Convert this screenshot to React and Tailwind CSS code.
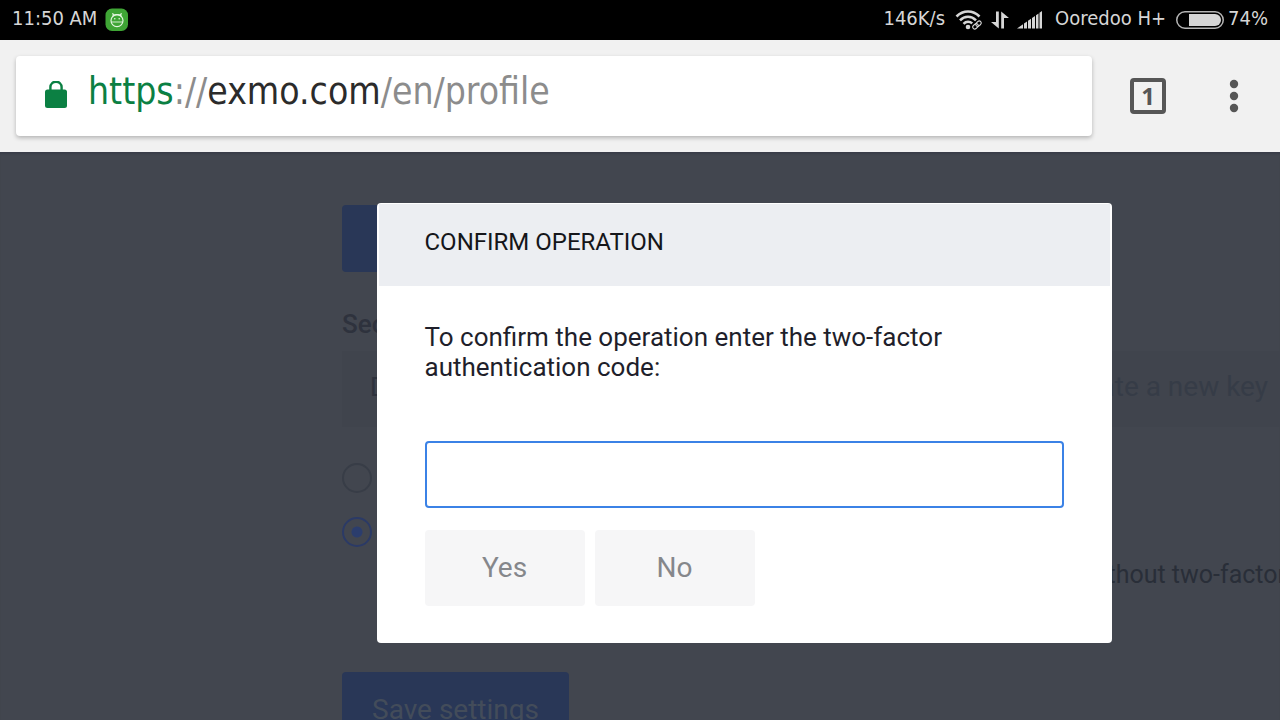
import React from 'react';

function MascotIcon() {
  return (
    <svg width="24" height="24" viewBox="0 0 24 24" fill="none" aria-hidden="true">
      <rect x="0.500" y="0.500" width="22.500" height="22.500" rx="6.500" fill="#3fa535" />
      <path
        d="M7.800 5.500 8.600 7.800M16.200 5.500 15.400 7.800M8 7.800c1.200-.8 2.500-1.200 4-1.200s2.800.4 4 1.200"
        stroke="#e4f5df"
        strokeWidth="1.200"
        strokeLinecap="round"
      />
      <circle cx="12" cy="12.600" r="6" stroke="#e4f5df" strokeWidth="1.200" />
      <path d="M6.500 14h11" stroke="#e4f5df" strokeWidth="0.900" />
      <circle cx="9.800" cy="10.800" r=".8" fill="#e4f5df" />
      <circle cx="14.200" cy="10.800" r=".8" fill="#e4f5df" />
    </svg>
  );
}

function WifiIcon() {
  return (
    <svg width="28" height="20" viewBox="0 0 28 20" fill="none" stroke="#d6d6d6" aria-hidden="true">
      <path d="M1.500 6.500C5 3 8.800 1.500 13 1.500S21 3 24.500 6.500" strokeWidth="2.600" />
      <path d="M5 10.300c2.300-2.300 5-3.500 8-3.500s5.700 1.200 8 3.500" strokeWidth="2.600" />
      <path d="M8.500 13.800c1.300-1.300 2.800-2 4.500-2s3 .5 4.200 1.600" strokeWidth="2.600" />
      <circle cx="13" cy="17" r="2.300" fill="#d6d6d6" stroke="none" />
      <g strokeWidth="1.100" transform="rotate(-42 22 15)">
        <rect x="17" y="13" width="6" height="4" rx="2" />
        <rect x="21" y="13" width="6" height="4" rx="2" />
      </g>
    </svg>
  );
}

function DataIcon() {
  return (
    <svg width="18" height="18" viewBox="0 0 18 18" fill="#d6d6d6" aria-hidden="true">
      <path d="M5 0.500h2.800v17L0 11h5z" />
      <path d="M13 17.500h-2.800V0.500l7.800 6.500h-5z" />
    </svg>
  );
}

function SignalIcon() {
  return (
    <svg width="26" height="18" viewBox="0 0 26 18" fill="#d6d6d6" aria-hidden="true">
      <path d="M0 17.500 6 13.300V17.500z" />
      <path d="M7 12.600 10 10.500v7H7z" />
      <path d="M11 9.800 14 7.700v9.800H11z" />
      <path d="M15 7 18 5v12.500H15z" />
      <path d="M19 4.200 21.500 2.500v15H19z" />
      <path d="M22.500 1.800 25 0v17.500h-2.500z" />
    </svg>
  );
}

function BatteryIcon() {
  return (
    <svg width="48" height="18" viewBox="0 0 48 18" fill="none" aria-hidden="true">
      <rect x="0.750" y="0.750" width="46.500" height="16.500" rx="8.250" stroke="#b4b4b4" strokeWidth="1.500" />
      <path d="M13 3h26a6 6 0 0 1 0 12H13z" fill="#d6d6d6" />
    </svg>
  );
}

function LockIcon() {
  return (
    <svg width="24" height="30" viewBox="0 0 24 30" fill="none" aria-hidden="true">
      <rect x="1" y="8.500" width="22" height="18.500" rx="2.500" fill="#0b8043" />
      <path d="M6.400 9.500V6a5.600 5.300 0 0 1 11.200 0v3.500" stroke="#0b8043" strokeWidth="2.400" />
    </svg>
  );
}

function StatusBar() {
  return (
    <div className="flex h-10 shrink-0 items-center justify-between bg-black pr-3 pl-3 pb-1 font-['DejaVu_Sans_Condensed','DejaVu_Sans',sans-serif] text-[20px] text-[#d6d6d6]">
      <div className="flex items-center gap-2">
        <span>11:50 AM</span>
        <span className="pt-1"><MascotIcon /></span>
      </div>
      <div className="flex items-center whitespace-nowrap">
        <span>146K/s</span>
        <span className="flex items-center gap-2 pt-1 pl-2.5">
          <WifiIcon />
          <DataIcon />
          <SignalIcon />
        </span>
        <span className="pl-3">Ooredoo H+</span>
        <span className="pt-1 pr-1 pl-2.5"><BatteryIcon /></span>
        <span>74%</span>
      </div>
    </div>
  );
}

function Toolbar() {
  return (
    <header className="flex h-28 shrink-0 items-center bg-[#f1f1f1] pr-9 pl-4">
      <a
        href="https://exmo.com/en/profile"
        className="flex h-20 flex-1 items-center gap-5 rounded bg-white pl-7 shadow-[0_2px_4px_rgba(0,0,0,0.25)]"
      >
        <LockIcon />
        <span className="pb-2 font-['DejaVu_Sans_Condensed','DejaVu_Sans',sans-serif] text-[37px] text-[#8c8c8c]">
          <span className="text-[#0b8043]">https</span>://
          <span className="text-[#2b2b2b]">exmo.com</span>/en/profile
        </span>
      </a>
      <button
        type="button"
        aria-label="Tabs"
        className="ml-[38px] flex size-9 items-center justify-center rounded border-4 border-[#565656] font-['Noto_Sans',sans-serif] text-[24px] font-bold text-[#565656]"
      >
        1
      </button>
      <button type="button" aria-label="Menu" className="ml-[58px] flex w-5 justify-center">
        <svg width="10" height="34" viewBox="0 0 10 34" fill="#565656" aria-hidden="true">
          <circle cx="5" cy="5" r="4.200" />
          <circle cx="5" cy="17" r="4.200" />
          <circle cx="5" cy="29" r="4.200" />
        </svg>
      </button>
    </header>
  );
}

function Radio({ label, defaultChecked }) {
  return (
    <input
      type="radio"
      name="mode"
      aria-label={label}
      defaultChecked={defaultChecked}
      className="block size-[30px] appearance-none rounded-full border-2 border-[#383d47] checked:border-[#2b3a66] checked:bg-[radial-gradient(circle,#2b3d6d_5px,transparent_6px)]"
    />
  );
}

function ProfilePage() {
  return (
    <form className="pt-[53px] pl-[342px]" onSubmit={(e) => e.preventDefault()}>
      <button type="button" aria-label="Enable" className="block h-[67px] w-[227px] rounded-sm bg-[#293757]" />
      <h2 className="mt-9 text-[26px] leading-8 font-medium text-[#2e323d]">Secret</h2>
      <div className="mt-[11px] flex h-[76px] items-center justify-between bg-[#40444d] pr-3 pb-1 pl-7">
        <span className="text-[26px] text-[#2e323d]">D</span>
        <button type="button" className="text-[28px] text-[#363c47]">Create a new key</button>
      </div>
      <div className="mt-9 flex flex-col gap-6">
        <Radio label="Always" />
        <Radio label="Login" defaultChecked />
      </div>
      <p className="-mr-1.5 mt-3 text-right text-[25px] leading-8 whitespace-nowrap text-[#292e38]">without two-factor</p>
      <button type="submit" className="mt-[81px] block h-[76px] w-[227px] rounded-sm bg-[#293757] text-[28px] text-[#434c5a]">
        Save settings
      </button>
    </form>
  );
}

function ConfirmDialog() {
  return (
    <div className="absolute inset-0 flex items-start justify-center pt-[51px] pl-[208px]">
      <form
        role="dialog"
        aria-labelledby="confirm-title"
        onSubmit={(e) => e.preventDefault()}
        className="w-[735px] rounded bg-white"
      >
        <h1 id="confirm-title" className="mx-0.5 mt-px bg-[#eceef2] px-[46px] pt-[22px] pb-7 text-[24px] leading-8 text-[#15161a]">
          CONFIRM OPERATION
        </h1>
        <div className="px-12 pt-9 pb-[37px]">
          <label htmlFor="code" className="block text-[26px] leading-[30px] text-[#1f1f2b]">
            To confirm the operation enter the two-factor authentication code:
          </label>
          <input
            id="code"
            type="text"
            className="mt-[59px] block h-[67px] w-full rounded border-2 border-[#3b82e6] bg-white px-4 text-[26px] outline-none"
          />
          <div className="mt-[22px] flex gap-2.5 text-[28px] text-[#85878b]">
            <button type="submit" className="h-[76px] w-40 rounded bg-[#f6f6f7]">Yes</button>
            <button type="button" className="h-[76px] w-40 rounded bg-[#f6f6f7]">No</button>
          </div>
        </div>
      </form>
    </div>
  );
}

export default function App() {
  return (
    <div className="flex h-screen flex-col font-[Roboto,sans-serif]">
      <StatusBar />
      <Toolbar />
      <main className="relative min-h-0 flex-1 overflow-hidden bg-[#42464f] shadow-[inset_0_3px_2px_-1px_#393d48]">
        <ProfilePage />
        <ConfirmDialog />
      </main>
    </div>
  );
}
